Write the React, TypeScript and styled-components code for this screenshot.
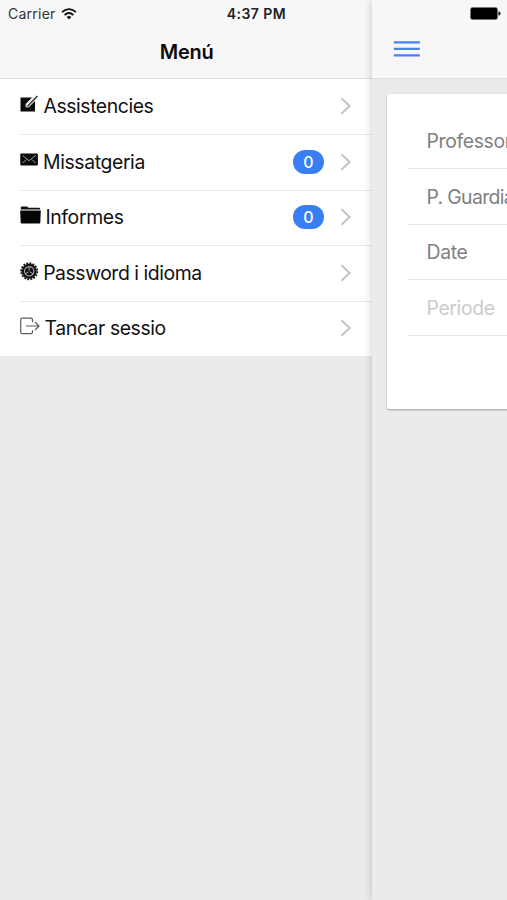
import React from "react";
import styled, { createGlobalStyle } from "styled-components";

const GlobalStyle = createGlobalStyle`
  * { box-sizing: border-box; }
  html, body { margin: 0; padding: 0; overflow: hidden; }
  body { font-family: Inter, "Liberation Sans", sans-serif; color: #111; }
`;

const Screen = styled.div`
  position: relative;
  display: flex;
  width: 507px;
  height: 900px;
  overflow: hidden;
  background: #ebebeb;
`;

const StatusBar = styled.div`
  position: absolute;
  z-index: 3;
  top: 0;
  left: 0;
  right: 0;
  height: 27px;
  display: grid;
  grid-template-columns: 1fr auto 1fr;
  align-items: center;
  padding: 0 6px 0 8px;
`;

const Carrier = styled.div`
  display: flex;
  align-items: center;
  gap: 5.4px;
  font-size: 14px;
  letter-spacing: 0.25px;
  color: #333;
`;

const Clock = styled.div`
  padding-left: 4px;
  font-size: 14px;
  font-weight: 600;
  letter-spacing: 0.45px;
  color: #222;
`;

const Battery = styled.div`
  display: flex;
  justify-content: flex-end;
`;

const MenuPane = styled.aside`
  flex: none;
  width: 372.4px;
`;

const PageHeader = styled.header`
  display: flex;
  align-items: center;
  height: 79px;
  padding: 24px 0 4px;
  background: #f7f7f7;
  border-bottom: 1px solid #dfdfdf;
`;

const Title = styled.h1`
  flex: 1;
  margin: 0;
  padding: 5px 0 0 1px;
  text-align: center;
  font-size: 20px;
  font-weight: 600;
  letter-spacing: -0.2px;
  color: #0c0c0c;
`;

const MenuList = styled.nav`
  height: 277px;
  display: grid;
  grid-template-rows: repeat(4, 55.6px) 1fr;
  padding: 0.4px 0 0 20px;
  background: #fff;
`;

const MenuItem = styled.div`
  display: flex;
  align-items: center;
  padding: 0 20px 1.4px 0;
  border-bottom: 1px solid #ebebeb;
  &:last-child { border-bottom: 0; }
`;

const IconSlot = styled.span<{ $width: number }>`
  flex: none;
  width: ${(p) => p.$width}px;
  height: 20px;
  margin-top: -2px;
  svg { display: block; }
`;

const ItemLabel = styled.span<{ $tracking: number }>`
  flex: 1;
  font-size: 19.4px;
  line-height: 24px;
  letter-spacing: ${(p) => p.$tracking}px;
  white-space: nowrap;
`;

const Badge = styled.span`
  display: flex;
  align-items: center;
  justify-content: center;
  width: 31px;
  height: 24px;
  margin-right: 16.4px;
  border-radius: 12px;
  background: #387ef5;
  color: #fff;
  font-size: 16px;
  font-weight: 500;
`;

const ContentPane = styled.main`
  position: relative;
  z-index: 1;
  flex: 1;
  min-width: 0;
  background: #ebebeb;
  box-shadow: 0 0 9px rgba(0, 0, 0, 0.2);
`;

const MenuButton = styled.button`
  display: flex;
  margin-left: 20.5px;
  padding: 0;
  border: 0;
  background: none;
`;

const Card = styled.section`
  width: 140px;
  height: 315px;
  margin: 15px 0 0 14.8px;
  padding: 19.4px 0 0 21px;
  border-radius: 2px;
  background: #fff;
  box-shadow: 0 1px 2px rgba(0, 0, 0, 0.32);
`;

const FieldList = styled.div`
  display: grid;
  grid-template-rows: repeat(4, 55.7px);
`;

const Field = styled.div<{ $disabled?: boolean; $tracking?: number }>`
  display: flex;
  align-items: center;
  padding: 0.2px 0 0 18.3px;
  border-bottom: 1px solid #e9e9e9;
  font-size: 19.4px;
  letter-spacing: ${(p) => p.$tracking ?? -0.35}px;
  white-space: nowrap;
  color: ${(p) => (p.$disabled ? "#cbcbcb" : "#808080")};
`;

const WifiIcon = () => (
  <svg width="16" height="12" viewBox="0 0 16 12" fill="none" stroke="#111" strokeWidth="1.8">
    <path d="M1 4.1Q8-1.8 15 4.1M3.6 7Q8 3.1 12.4 7" />
    <path d="M5.6 9Q8 7 10.4 9L8 11.6Z" fill="#111" stroke="none" />
  </svg>
);

const BatteryIcon = () => (
  <svg width="31" height="13" viewBox="0 0 31 13">
    <rect x=".5" y=".5" width="27" height="12" rx="2" fill="#000" stroke="#777" strokeWidth=".7" />
    <path d="M28.4 4.2Q30.6 4.8 30.6 6.5T28.4 8.8Z" fill="#222" />
  </svg>
);

const ComposeIcon = () => (
  <svg width="20" height="20" viewBox="0 0 20 20">
    <path d="M.5 2.5H12L5.7 9V12H8.5L15 5.5V16.5H.5Z" fill="#090909" />
    <path d="M7 10.8L16.8.4L18 1.6L8.2 11.4L6.6 12Z" fill="#333" />
    <path d="M6.2 12.1V9.3L13 2.5M6.2 12.1H8.7L15 5.8" fill="none" stroke="#bbb" strokeWidth=".8" />
  </svg>
);

const MailIcon = () => (
  <svg width="19" height="20" viewBox="0 0 19 20">
    <rect x=".3" y="2.4" width="17.6" height="12.2" rx="1" fill="#080808" />
    <path d="M2.5 4.4L9.1 9.7L15.7 4.4M2.6 12.1L6.2 8.5M15.6 12.1L12 8.5" fill="none" stroke="#b5b5b5" strokeWidth=".9" />
  </svg>
);

const FolderIcon = () => (
  <svg width="22" height="20" viewBox="0 0 22 20">
    <path d="M.8 3.6V1.6Q.8.6 1.8.6H7L8.5 1.8H19Q20.2 1.8 20.2 2.9V3.6Z" fill="#111" />
    <path d="M.2 4.6H20.8L20.3 16.6Q20.2 17.6 19.3 17.6H1.7Q.8 17.6 .7 16.6Z" fill="#050505" />
    <path d="M.4 4.3H20.6" stroke="#888" strokeWidth=".7" />
  </svg>
);

const GearIcon = () => (
  <svg width="19" height="20" viewBox="0 0 19 20">
    <circle cx="9.2" cy="9.3" r="7.5" fill="#111" />
    <circle cx="9.2" cy="9.3" r="8.1" fill="none" stroke="#111" strokeWidth="1.7" strokeDasharray="1.9 1.28" />
    <circle cx="9.2" cy="9.3" r="4.7" fill="none" stroke="#aaa" strokeWidth="1.1" />
    <path d="M9.2 9.3V4.8M9.2 9.3L5.4 11.8M9.2 9.3L13 11.8" stroke="#aaa" strokeWidth="1" />
    <circle cx="9.2" cy="9.3" r="1.3" fill="#333" />
  </svg>
);

const ExitIcon = () => (
  <svg width="21" height="20" viewBox="0 0 21 20" fill="none" stroke="#5c5c5c" strokeWidth="1.2">
    <path d="M12.5 5V3Q12.5 1.2 11 1.2H2.2Q.7 1.2 .7 3V15Q.7 16.6 2.2 16.6H11Q12.5 16.6 12.5 15V13.2" />
    <path d="M6 9H18.8M15 5L19 9L15 13" />
  </svg>
);

const Chevron = () => (
  <svg width="12" height="18" viewBox="0 0 12 18" fill="none" stroke="#c3c3c3" strokeWidth="2">
    <path d="M1.5 1.2L9.6 9L1.5 16.8" />
  </svg>
);

const HamburgerIcon = () => (
  <svg width="28" height="18" viewBox="0 0 28 18" stroke="#4684ea" strokeWidth="2.2">
    <path d="M.8 2.3H26.8M.8 8.8H26.8M.8 15.3H26.8" />
  </svg>
);

const menu = [
  { label: "Assistencies", Icon: ComposeIcon, slot: 23.5, tracking: -0.43 },
  { label: "Missatgeria", Icon: MailIcon, slot: 23, tracking: -0.38, count: 0 },
  { label: "Informes", Icon: FolderIcon, slot: 25.4, tracking: -0.35, count: 0 },
  { label: "Password i idioma", Icon: GearIcon, slot: 23.2, tracking: -0.45 },
  { label: "Tancar sessio", Icon: ExitIcon, slot: 24.5, tracking: -0.42 },
];

export default function App() {
  return (
    <>
      <GlobalStyle />
      <Screen>
        <StatusBar>
          <Carrier>Carrier <WifiIcon /></Carrier>
          <Clock>4:37 PM</Clock>
          <Battery><BatteryIcon /></Battery>
        </StatusBar>
        <MenuPane>
          <PageHeader><Title>Menú</Title></PageHeader>
          <MenuList>
            {menu.map(({ label, Icon, slot, tracking, count }) => (
              <MenuItem key={label}>
                <IconSlot $width={slot}><Icon /></IconSlot>
                <ItemLabel $tracking={tracking}>{label}</ItemLabel>
                {count !== undefined && <Badge>{count}</Badge>}
                <Chevron />
              </MenuItem>
            ))}
          </MenuList>
        </MenuPane>
        <ContentPane>
          <PageHeader>
            <MenuButton aria-label="Menú"><HamburgerIcon /></MenuButton>
          </PageHeader>
          <Card>
            <FieldList>
              <Field>Professor</Field>
              <Field $tracking={-0.65}>P. Guardia</Field>
              <Field>Date</Field>
              <Field $disabled>Periode</Field>
            </FieldList>
          </Card>
        </ContentPane>
      </Screen>
    </>
  );
}
